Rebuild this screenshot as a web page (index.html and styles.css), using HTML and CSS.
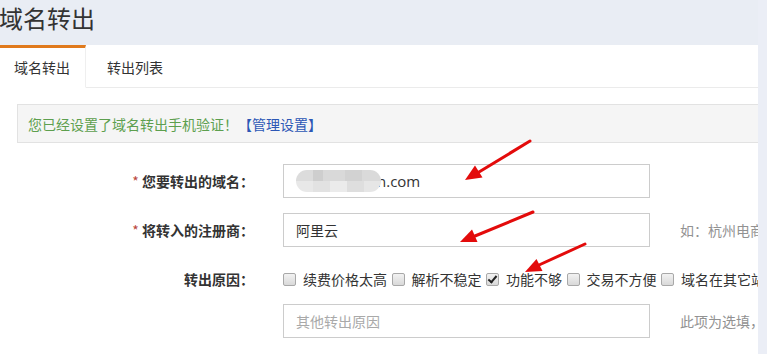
FILE: index.html
```html
<!DOCTYPE html>
<html lang="zh-CN">
<head>
<meta charset="utf-8">
<title>域名转出</title>
<link rel="stylesheet" href="styles.css">
</head>
<body>
<div class="app">
  <div class="main">
    <h1 class="page-title">域名转出</h1>
    <div class="panel">
      <div class="tabs">
        <div class="tab active">域名转出</div>
        <div class="tab">转出列表</div>
        <div class="tab-fill"></div>
      </div>
      <div class="alert">
        <span class="alert-text">您已经设置了域名转出手机验证！</span><a class="alert-link">【管理设置】</a>
      </div>
      <form class="form">
        <div class="row">
          <label class="label"><span class="req">*</span> 您要转出的域名：</label>
          <div class="input"><span class="blur"></span><span class="domain">n.com</span></div>
        </div>
        <div class="row">
          <label class="label"><span class="req">*</span> 将转入的注册商：</label>
          <div class="input">阿里云</div>
          <span class="hint">如：杭州电商</span>
        </div>
        <div class="row row-check">
          <label class="label">转出原因：</label>
          <div class="checks">
            <span class="cb"></span><span class="cb-text">续费价格太高</span>
            <span class="cb"></span><span class="cb-text">解析不稳定</span>
            <span class="cb checked"></span><span class="cb-text">功能不够</span>
            <span class="cb"></span><span class="cb-text">交易不方便</span>
            <span class="cb"></span><span class="cb-text">域名在其它站</span>
          </div>
        </div>
        <div class="row">
          <label class="label"></label>
          <div class="input placeholder">其他转出原因</div>
          <span class="hint">此项为选填，</span>
        </div>
      </form>
    </div>
  </div>
  <div class="strip"></div>
</div>
<svg class="arrows" width="767" height="354" viewBox="0 0 767 354">
  <g stroke="#e30b0b" stroke-width="3" stroke-linecap="round">
    <line x1="530" y1="141" x2="479" y2="172"/>
    <line x1="533" y1="212" x2="475" y2="236"/>
    <line x1="585" y1="244" x2="539" y2="265"/>
  </g>
  <g fill="#e30b0b">
    <polygon points="465,180 482.5,177.5 475,165.5"/>
    <polygon points="460,242 477.5,242 472,229.5"/>
    <polygon points="525,272 542.5,271 536.5,259"/>
  </g>
</svg>
</body>
</html>
```
FILE: styles.css
```css
html, body {
  margin: 0;
  padding: 0;
}
body {
  background: #e9edf4;
  font-family: "Noto Sans CJK SC", "Noto Sans", sans-serif;
  color: #333;
  width: 767px;
  height: 354px;
  overflow: hidden;
}
.app {
  display: flex;
  height: 354px;
}
.main {
  width: 758px;
  overflow: hidden;
  flex: none;
}
.strip {
  flex: 1;
  background: #ebeef6;
}
.page-title {
  margin: 0;
  height: 45px;
  font-size: 24px;
  font-weight: normal;
  line-height: 36px;
  color: #333;
  margin-left: -1px;
}
.panel {
  background: #fff;
  height: 309px;
}
.tabs {
  display: flex;
  height: 43px;
}
.tab {
  font-size: 14px;
  line-height: 40px;
  padding: 2px 21px 0;
  border-bottom: 1px solid #ebebeb;
  box-sizing: border-box;
  height: 43px;
  color: #333;
}
.tab.active {
  border-top: 3px solid #e07a1c;
  border-right: 1px solid #efefef;
  border-bottom: 1px solid #fff;
  padding: 0 15px 0 14px;
  line-height: 39px;
}
.tab-fill {
  flex: 1;
  border-bottom: 1px solid #ebebeb;
}
.alert {
  margin: 16px 0 0 17px;
  width: 800px;
  height: 37px;
  background: #f5f5f5;
  border: 1px solid #e2e2e2;
  display: flex;
  align-items: center;
  padding-left: 10px;
  font-size: 14px;
}
.alert-text {
  color: #5d9f4e;
}
.alert-link {
  color: #2c57b5;
}
.form {
  margin-top: 21px;
}
.row {
  display: flex;
  align-items: center;
  margin-bottom: 15px;
  white-space: nowrap;
}
.label {
  width: 254px;
  text-align: right;
  font-size: 14px;
  font-weight: bold;
  color: #333;
  flex: none;
  margin-right: 29px;
}
.req {
  color: #b9463c;
  font-weight: normal;
}
.input {
  width: 367px;
  height: 34px;
  box-sizing: border-box;
  border: 1px solid #cccccc;
  padding-left: 12px;
  font-size: 14px;
  line-height: 32px;
  color: #333;
  display: flex;
  align-items: center;
  flex: none;
}
.placeholder {
  color: #a9a9a9;
}
.blur {
  width: 85px;
  height: 22px;
  border-radius: 11px;
  position: relative;
  z-index: 1;
  margin-right: -4px;
  background:
    linear-gradient(to right, #dcdcdc 0 20%, #cecece 20% 32%, #d9d9d9 32% 58%, #d2d2d2 58% 78%, #dadada 78% 100%) top / 100% 50% no-repeat,
    linear-gradient(to right, #e8e8e8 0 20%, #e2e2e2 20% 40%, #ebebeb 40% 60%, #dedede 60% 80%, #e6e6e6 80% 100%) bottom / 100% 50% no-repeat;
}
.domain {
  font-family: "Open Sans", "Noto Sans", sans-serif;
  font-size: 15px;
  color: #333;
}
.hint {
  margin-left: 30px;
  font-size: 14px;
  color: #929292;
}
.row-check {
  align-items: flex-start;
  height: 27px;
  box-sizing: border-box;
}
.row-check .label {
  line-height: 20px;
  padding-top: 7px;
}
.checks {
  display: flex;
  align-items: center;
  padding-top: 7px;
  height: 20px;
  font-size: 14px;
  color: #333;
}
.cb {
  width: 11px;
  height: 11px;
  border: 1px solid #a8a8a8;
  border-radius: 2px;
  background: linear-gradient(#f2f2f2, #d9d9d9);
  margin-right: 7px;
  flex: none;
  position: relative;
}
.cb.checked::after {
  content: "";
  position: absolute;
  left: 3px;
  top: 0px;
  width: 3px;
  height: 7px;
  border: solid #222;
  border-width: 0 2px 2px 0;
  transform: rotate(40deg);
}
.cb-text {
  margin-right: 4.5px;
}
.arrows {
  position: absolute;
  left: 0;
  top: 0;
  pointer-events: none;
}
```
